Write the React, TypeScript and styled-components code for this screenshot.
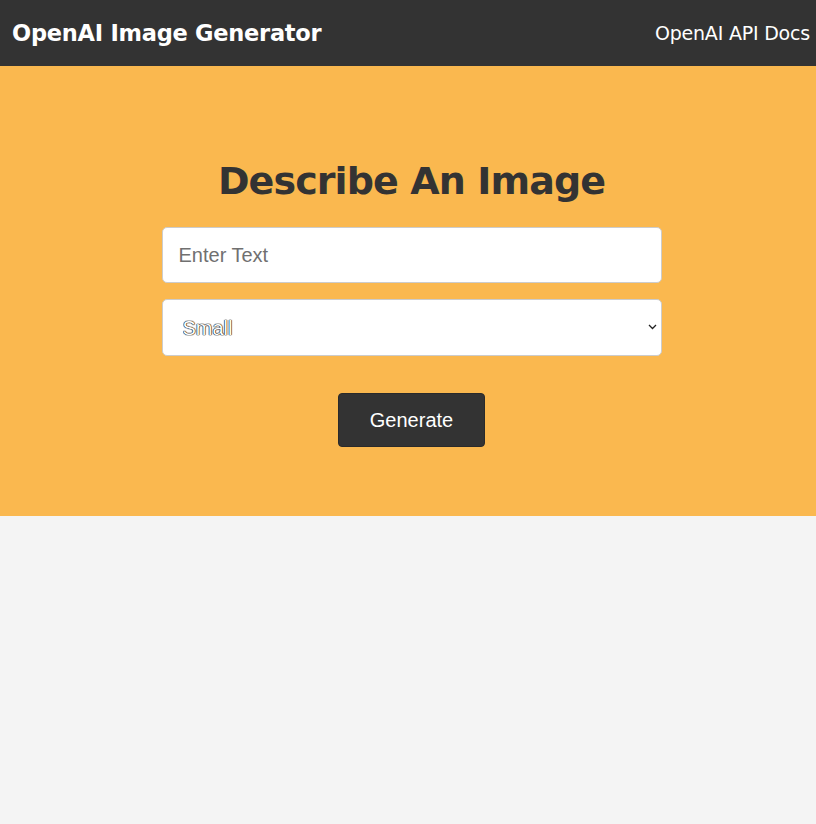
import React from "react";
import styled, { createGlobalStyle } from "styled-components";

const GlobalStyle = createGlobalStyle`
  * { box-sizing: border-box; }
  html, body { margin: 0; padding: 0; }
  body {
    background: #f4f4f4;
    font-family: "DejaVu Sans", "Noto Sans", sans-serif;
    min-height: 824px;
  }
`;

const NavBar = styled.header`
  height: 66px;
  background: #333333;
  color: #ffffff;
  display: flex;
  align-items: center;
  justify-content: space-between;
  padding: 0 6px 0 12px;
`;

const Logo = styled.h1`
  margin: 0;
  font-family: "DejaVu Sans", sans-serif;
  font-weight: 700;
  font-size: 22.5px;
  letter-spacing: -0.25px;
`;

const NavLink = styled.a`
  color: #ffffff;
  text-decoration: none;
  font-family: "DejaVu Sans", sans-serif;
  font-size: 19px;
  letter-spacing: -0.2px;
`;

const Showcase = styled.section`
  height: 450px;
  background: #fab84f;
  display: flex;
  flex-direction: column;
  align-items: center;
  padding: 91px 0 0 7px;
`;

const Title = styled.h2`
  margin: 0 0 22px;
  color: #333333;
  font-family: "DejaVu Sans", sans-serif;
  font-weight: 700;
  font-size: 38px;
  line-height: 48px;
  letter-spacing: -0.9px;
`;

const Form = styled.form`
  width: 500px;
  display: flex;
  flex-direction: column;
  align-items: center;
`;

const TextInput = styled.input`
  width: 100%;
  height: 56px;
  margin-bottom: 16px;
  padding: 0 16px;
  border: 1px solid #cccccc;
  border-radius: 5px;
  background: #ffffff;
  font-family: "Liberation Sans", Arial, sans-serif;
  font-size: 20px;
  color: #333;
  outline: none;
  &::placeholder { color: #707070; }
`;

const SelectWrap = styled.div`
  position: relative;
  width: 100%;
  height: 57px;
`;

const Select = styled.select`
  appearance: none;
  width: 100%;
  height: 100%;
  padding: 0 20px;
  border: 1px solid #cccccc;
  border-radius: 5px;
  background: #ffffff;
  font-family: "Liberation Sans", Arial, sans-serif;
  font-size: 20px;
  color: #ffffff;
  text-shadow: 0 0 1px #000, 0 0 1px #000, 0 0 1px #000;
  outline: none;
`;

const Chevron = styled.svg`
  position: absolute;
  right: 5px;
  top: 25px;
  width: 9px;
  height: 6px;
  pointer-events: none;
`;

const Button = styled.button`
  margin-top: 37px;
  width: 147px;
  height: 54px;
  background: #333333;
  color: #ffffff;
  border: 1px solid #2a2a2a;
  border-radius: 4px;
  font-family: "Liberation Sans", Arial, sans-serif;
  font-size: 20px;
  cursor: pointer;
`;

export default function App() {
  return (
    <>
      <GlobalStyle />
      <NavBar>
        <Logo>OpenAI Image Generator</Logo>
        <NavLink href="#">OpenAI API Docs</NavLink>
      </NavBar>
      <Showcase>
        <Title>Describe An Image</Title>
        <Form onSubmit={(e) => e.preventDefault()}>
          <TextInput type="text" placeholder="Enter Text" />
          <SelectWrap>
            <Select defaultValue="small">
              <option value="small">Small</option>
              <option value="medium">Medium</option>
              <option value="large">Large</option>
            </Select>
            <Chevron viewBox="0 0 9 6">
              <path d="M1 1l3.5 3.5L8 1" fill="none" stroke="#222" strokeWidth="1.3" />
            </Chevron>
          </SelectWrap>
          <Button type="submit">Generate</Button>
        </Form>
      </Showcase>
    </>
  );
}
